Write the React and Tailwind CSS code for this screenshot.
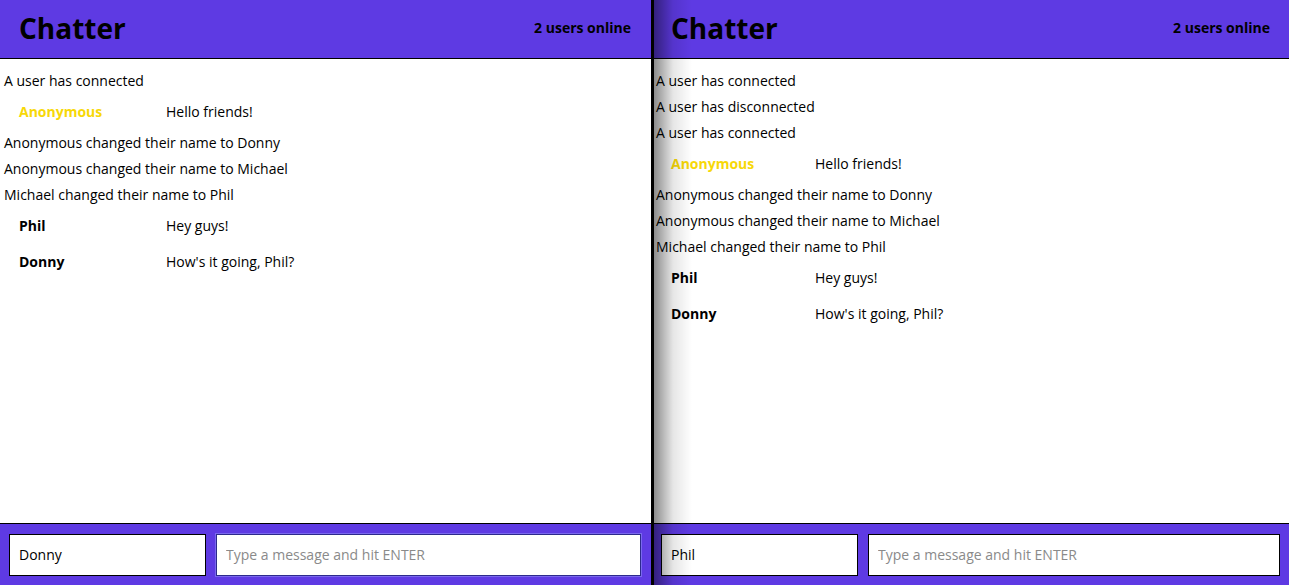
import React from 'react';

const leftLog = [
  { type: 'sys', text: 'A user has connected' },
  { type: 'msg', name: 'Anonymous', text: 'Hello friends!', anon: true },
  { type: 'sys', text: 'Anonymous changed their name to Donny' },
  { type: 'sys', text: 'Anonymous changed their name to Michael' },
  { type: 'sys', text: 'Michael changed their name to Phil' },
  { type: 'msg', name: 'Phil', text: 'Hey guys!' },
  { type: 'msg', name: 'Donny', text: "How's it going, Phil?" },
];

const rightLog = [
  { type: 'sys', text: 'A user has connected' },
  { type: 'sys', text: 'A user has disconnected' },
  ...leftLog,
];

// one chat client window
function ChatPane({ log, user, focused, right }) {
  return (
    <div className={'relative flex h-full flex-col ' + (right ? 'flex-1' : 'w-[651px]')}>
      <header className={'flex h-[59px] shrink-0 items-center justify-between border-b border-black bg-[#5e3ae3] pb-[2px] ' + (right ? 'pl-[17px] pr-[19px]' : 'pl-[19px] pr-[20px]')}>
        <h1 className="text-[28px] font-bold leading-none text-black">Chatter</h1>
        <span className="mb-[2px] text-[14px] font-bold text-black">2 users online</span>
      </header>

      <div className={'flex-1 overflow-hidden bg-white pt-2 text-[14px] text-black ' + (right ? 'pl-[2px]' : 'pl-1')}>
        {log.map((item, i) =>
          item.type === 'sys' ? (
            <div key={i} className="flex h-[26px] items-center">{item.text}</div>
          ) : (
            <div key={i} className="flex h-[36px] items-center pl-[15px]">
              <span className={'shrink-0 font-bold ' + (right ? 'w-[144px] ' : 'w-[147px] ') + (item.anon ? 'text-[#f7d808]' : 'text-black')}>
                {item.name}
              </span>
              <span>{item.text}</span>
            </div>
          )
        )}
      </div>

      <footer className={'flex h-[62px] shrink-0 items-center gap-[10px] border-t border-black bg-[#5e3ae3] ' + (right ? 'pl-[7px] pr-[9px]' : 'pl-[9px] pr-[10px]')}>
        <input
          readOnly
          value={user}
          className="h-[42px] w-[197px] border border-black bg-white px-[9px] text-[14px] text-black outline-none"
        />
        <input
          readOnly
          placeholder="Type a message and hit ENTER"
          className={'h-[42px] flex-1 bg-white px-[9px] text-[14px] text-black outline-none placeholder:text-[#8a8a8a] ' + (focused ? 'border border-[#2d2a8c] ring-1 ring-[#7a68ee]' : 'border border-black')}
        />
      </footer>

      {/* shadow cast by the divider */}
      {right && <div className="pointer-events-none absolute inset-y-0 left-0 w-[38px] bg-linear-to-r from-black/45 via-black/10 to-transparent" />}
    </div>
  );
}

export default function App() {
  return (
    <div className="flex h-[585px] w-full overflow-hidden bg-white" style={{ fontFamily: '"Open Sans", "Liberation Sans", sans-serif' }}>
      <ChatPane log={leftLog} user="Donny" focused />
      <div className="h-full w-[3px] shrink-0 bg-black" />
      <ChatPane log={rightLog} user="Phil" right />
    </div>
  );
}
